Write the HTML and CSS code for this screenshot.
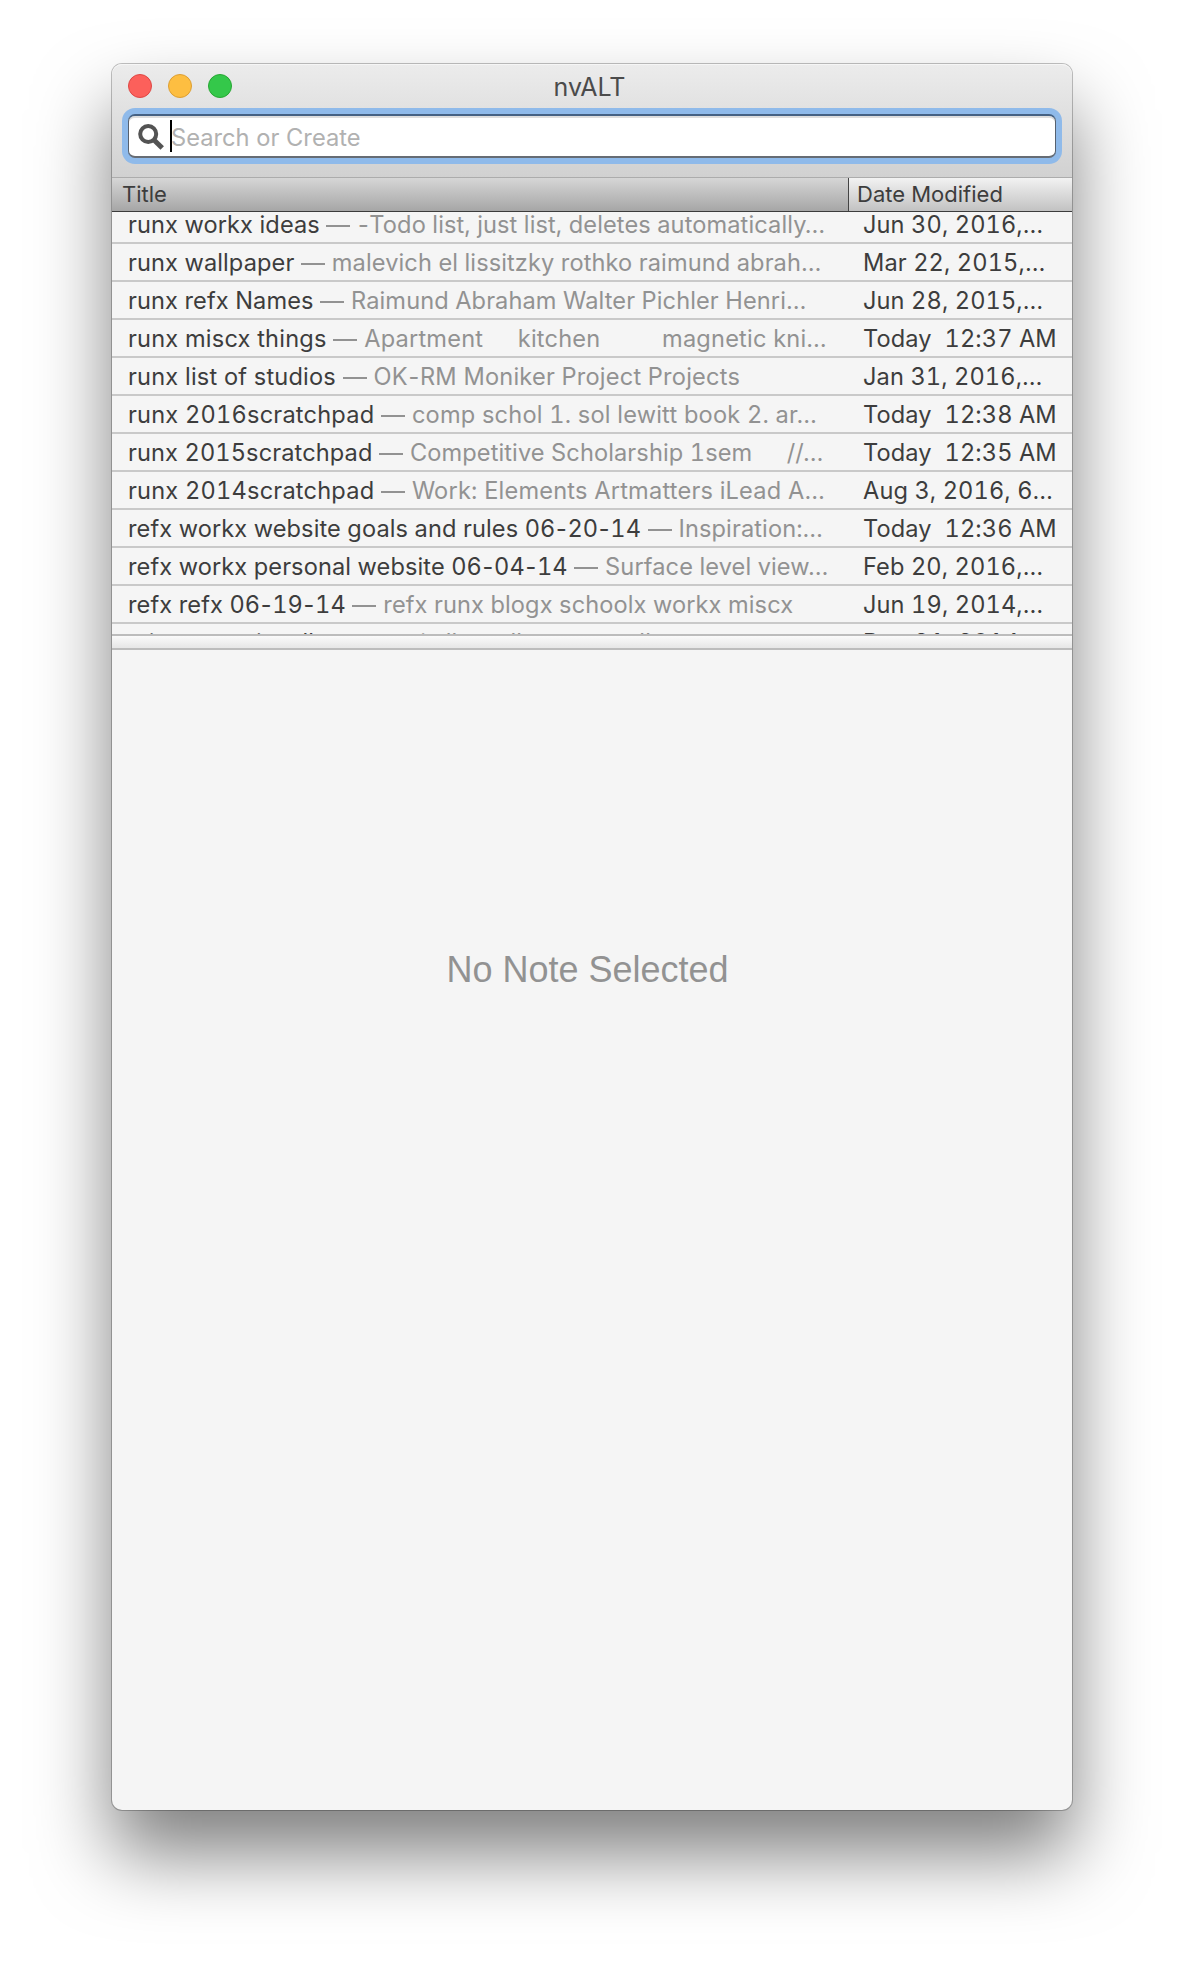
FILE: index.html
```
<!DOCTYPE html>
<html lang="en">
<head>
<meta charset="utf-8">
<title>nvALT</title>
<link rel="stylesheet" href="styles.css">
</head>
<body>
<main class="window">
  <header class="titlebar">
    <div class="caption">
      <div class="lights"><span class="light close"></span><span class="light minimize"></span><span class="light zoom"></span></div>
      <h1 class="app-name">nvALT</h1>
    </div>
    <div class="search">
      <svg class="search-icon" width="28" height="28" viewBox="0 0 28 28" fill="none" stroke="#535353"><circle cx="11.2" cy="11" r="8" stroke-width="4"/><path d="M17 17l8.2 8" stroke-width="5"/></svg>
      <span class="caret"></span>
      <span class="placeholder">Search or Create</span>
    </div>
  </header>
  <div class="columns"><div class="col-title">Title</div><div class="col-date">Date Modified</div></div>
  <section class="list">
    <div class="row"><div class="note">runx workx ideas <span class="body"><i class="dash"></i><span class="hy">-</span>Todo list, just list, deletes automatically…</span></div><div class="date">Jun 30, 2016,…</div></div>
    <div class="row"><div class="note">runx wallpaper <span class="body"><i class="dash"></i>malevich el lissitzky rothko raimund abrah…</span></div><div class="date">Mar 22, 2015,…</div></div>
    <div class="row"><div class="note">runx refx Names <span class="body"><i class="dash"></i>Raimund Abraham Walter Pichler Henri…</span></div><div class="date">Jun 28, 2015,…</div></div>
    <div class="row loose"><div class="note">runx miscx things <span class="body"><i class="dash"></i>Apartment <span class="tab">kitchen</span> <span class="tab wide">magnetic kni…</span></span></div><div class="date">Today&nbsp; 12:37 AM</div></div>
    <div class="row loose"><div class="note">runx list of studios <span class="body"><i class="dash"></i>OK<span class="hy">-</span>RM Moniker Project Projects</span></div><div class="date">Jan 31, 2016,…</div></div>
    <div class="row loose"><div class="note">runx 2016scratchpad <span class="body"><i class="dash"></i>comp schol 1. sol lewitt book 2. ar…</span></div><div class="date">Today&nbsp; 12:38 AM</div></div>
    <div class="row"><div class="note">runx 2015scratchpad <span class="body"><i class="dash"></i>Competitive Scholarship 1sem <span class="tab">//…</span></span></div><div class="date">Today&nbsp; 12:35 AM</div></div>
    <div class="row loose"><div class="note">runx 2014scratchpad <span class="body"><i class="dash"></i>Work: Elements Artmatters iLead A…</span></div><div class="date">Aug 3, 2016, 6…</div></div>
    <div class="row"><div class="note">refx workx website goals and rules 06<span class="hy">-</span>20<span class="hy">-</span>14 <span class="body"><i class="dash"></i>Inspiration:…</span></div><div class="date">Today&nbsp; 12:36 AM</div></div>
    <div class="row"><div class="note">refx workx personal website 06<span class="hy">-</span>04<span class="hy">-</span>14 <span class="body"><i class="dash"></i>Surface level view…</span></div><div class="date">Feb 20, 2016,…</div></div>
    <div class="row"><div class="note">refx refx 06<span class="hy">-</span>19<span class="hy">-</span>14 <span class="body"><i class="dash"></i>refx runx blogx schoolx workx miscx</span></div><div class="date">Jun 19, 2014,…</div></div>
    <div class="row"><div class="note">miscx runx i mall <span class="body"><i class="dash"></i>mean i all small summer all</span></div><div class="date">Dec 31, 2014,…</div></div>
  </section>
  <div class="splitter"></div>
  <section class="editor"><p class="empty">No Note Selected</p></section>
</main>
</body>
</html>
```
FILE: styles.css
```
* { box-sizing: border-box; }
body {
  margin: 0;
  padding: 64px 112px 0;
  height: 1970px;
  background: #fff;
  font-family: Inter, "Liberation Sans", sans-serif;
  color: #3d3d3d;
  overflow: hidden;
}
.window {
  display: flex;
  flex-direction: column;
  height: 1746px;
  border-radius: 10px;
  background: #f5f5f5;
  box-shadow: 0 0 0 1px rgba(0, 0, 0, .24), 0 44px 76px rgba(0, 0, 0, .5);
}
.titlebar {
  height: 114px;
  padding: 0 10px;
  border-radius: 10px 10px 0 0;
  border-bottom: 1px solid #acacac;
  background: linear-gradient(#ececec, #d1d1d1);
  box-shadow: inset 0 1px #f6f6f6;
}
.caption {
  display: grid;
  grid-template-columns: 1fr auto 1fr;
  height: 44px;
  align-items: center;
}
.lights { display: flex; gap: 16px; padding-left: 6px; }
.light { width: 24px; height: 24px; border-radius: 50%; border: 1px solid; }
.close { background: #fc605b; border-color: #de4744; }
.minimize { background: #fdbe41; border-color: #dd9f33; }
.zoom { background: #34c84a; border-color: #27a733; }
.app-name {
  margin: 2px 5px 0 0;
  font-size: 25px;
  font-weight: 400;
  line-height: 30px;
  color: #4b4b4b;
}
.search {
  display: flex;
  align-items: center;
  height: 44px;
  margin: 6px 6px 0;
  padding-left: 8px;
  border: 1px solid #56616f;
  border-top: 2px solid #456183;
  border-bottom: 2px solid #666c74;
  border-radius: 7px;
  background: #fff;
  box-shadow: 0 0 0 6px #8fbaea, inset 0 2px #dedede;
}
.search-icon { margin-top: 2px; }
.caret { width: 2px; height: 32px; margin-left: 5px; background: #000; }
.placeholder { margin: 3px 0 0 -1px; font-size: 23.7px; line-height: 30px; color: #b1b1b1; }
.columns {
  display: flex;
  flex: none;
  height: 34px;
  border-bottom: 1px solid #3c3c3c;
  font-size: 22px;
  line-height: 33px;
}
.col-title {
  width: 737px;
  padding-left: 10px;
  border-right: 1px solid #444;
  background: linear-gradient(#d6d6d6, #a6a6a6);
}
.col-date { flex: 1; padding-left: 8px; background: linear-gradient(#f2f2f2, #c2c2c2); }
.list {
  display: flex;
  flex: none;
  flex-direction: column;
  justify-content: flex-start;
  height: 422px;
  overflow: hidden;
}
.row {
  display: flex;
  flex: none;
  height: 38px;
  border-bottom: 2px solid #c9c9c9;
  font-size: 23.6px;
  font-feature-settings: "tnum";
  letter-spacing: .1px;
  line-height: 38px;
  white-space: nowrap;
}
.row:first-child { margin-top: -6px; }
.note { width: 736px; padding-left: 16px; }
.loose .note { letter-spacing: .2px; }
.date { padding-left: 15px; }
.body { color: #929292; }
.hy { margin: 0 -1.7px; }
.dash {
  display: inline-block;
  width: 24px;
  height: 2px;
  margin-right: 7px;
  vertical-align: 6px;
  background: #929292;
}
.tab { margin-left: 28px; }
.wide { margin-left: 55px; }
.splitter {
  flex: none;
  height: 16px;
  border-top: 2px solid #bcbcbc;
  border-bottom: 2px solid #bcbcbc;
  background: linear-gradient(#fafafa, #e6e6e6);
}
.editor { padding-top: 300px; }
.empty {
  margin: 0 9px 0 0;
  font: 36px/40px "Liberation Sans", Arial, sans-serif;
  text-align: center;
  color: #929292;
}
```
